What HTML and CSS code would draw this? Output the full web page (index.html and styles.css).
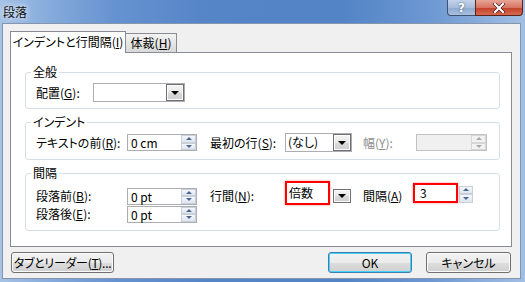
FILE: index.html
```html
<!DOCTYPE html>
<html lang="ja">
<head>
    <meta charset="UTF-8">
    <title>段落</title>
    <link rel="stylesheet" href="styles.css">
</head>
<body>

    <div class="window">
        <!-- Title bar -->
        <div class="titlebar">
            <span class="title">段落</span>
            <div class="caption-buttons">
                <span class="cap-btn help">?</span>
                <span class="cap-btn close">
                    <svg width="14" height="10" viewBox="0 0 14 10">
                        <path d="M3 1 L11 9 M11 1 L3 9" stroke="#3a1410" stroke-width="3.4" stroke-linecap="square" fill="none"/>
                        <path d="M3 1 L11 9 M11 1 L3 9" stroke="#fff" stroke-width="2.2" stroke-linecap="square" fill="none"/>
                    </svg>
                </span>
            </div>
        </div>

        <div class="client">
            <!-- Tabs -->
            <div class="tabs">
                <div class="tab active">インデントと行間隔(<u>I</u>)</div>
                <div class="tab">体裁(<u>H</u>)</div>
            </div>

            <div class="panel">
                <!-- General -->
                <div class="group g-general">
                    <div class="group-title">全般</div>
                    <div class="row-general">
                        <span class="lbl lbl-align">配置(<u>G</u>):</span>
                        <div class="combo combo-align">
                            <span class="combo-text"></span>
                            <span class="combo-btn"><i class="tri"></i></span>
                        </div>
                    </div>
                </div>

                <!-- Indent -->
                <div class="group g-indent">
                    <div class="group-title">インデント</div>
                    <div class="grid grid-indent">
                        <span class="lbl">テキストの前(<u>R</u>):</span>
                        <div class="spin">
                            <span class="spin-text">0 cm</span>
                            <span class="spin-btns"><i class="arr up"></i><i class="arr down"></i></span>
                        </div>
                        <span class="lbl">最初の行(<u>S</u>):</span>
                        <div class="combo combo-small">
                            <span class="combo-text">(なし)</span>
                            <span class="combo-btn"><i class="tri"></i></span>
                        </div>
                        <span class="lbl disabled">幅(<u>Y</u>):</span>
                        <div class="spin spin-disabled">
                            <span class="spin-text"></span>
                            <span class="spin-btns"><i class="arr up"></i><i class="arr down"></i></span>
                        </div>
                    </div>
                </div>

                <!-- Spacing -->
                <div class="group g-spacing">
                    <div class="group-title">間隔</div>
                    <div class="grid grid-spacing">
                        <span class="lbl">段落前(<u>B</u>):</span>
                        <div class="spin">
                            <span class="spin-text">0 pt</span>
                            <span class="spin-btns"><i class="arr up"></i><i class="arr down"></i></span>
                        </div>
                        <span class="lbl">行間(<u>N</u>):</span>
                        <div class="marked-combo">
                            <span class="mark mark-combo">倍数</span>
                            <span class="combo-btn short"><i class="tri"></i></span>
                        </div>
                        <span class="lbl">間隔(<u>A</u>)</span>
                        <div class="marked-spin">
                            <span class="mark mark-spin">3</span>
                            <span class="spin-btns loose"><i class="arr up"></i><i class="arr down"></i></span>
                        </div>

                        <span class="lbl">段落後(<u>E</u>):</span>
                        <div class="spin">
                            <span class="spin-text">0 pt</span>
                            <span class="spin-btns"><i class="arr up"></i><i class="arr down"></i></span>
                        </div>
                    </div>
                </div>
            </div>

            <!-- Buttons -->
            <div class="footer">
                <button class="btn btn-tabs">タブとリーダー(<u>T</u>)...</button>
                <button class="btn btn-ok">OK</button>
                <button class="btn btn-cancel">キャンセル</button>
            </div>
        </div>
    </div>

</body>
</html>
```

FILE: styles.css
```css
* {
    box-sizing: border-box;
}
body {
    margin: 0;
    font-family: "Noto Sans CJK JP", "Noto Sans", sans-serif;
    font-size: 12px;
    line-height: 14px;
    color: #000;
    font-feature-settings: "palt";
}
u {
    text-decoration-thickness: 1px;
    text-underline-offset: 1px;
}
.window {
    width: 525px;
    height: 282px;
    padding: 0 4px 3px 2px;
    display: flex;
    flex-direction: column;
    background: linear-gradient(90deg, #a6c2e6 0%, #8aaedd 8%, #6592d0 22%, #5584c7 40%, #5384c6 65%, #6d98d2 82%, #a2bfe4 100%);
}

/* Title bar */
.titlebar {
    height: 23px;
    flex-shrink: 0;
    display: flex;
    align-items: flex-start;
}
.title {
    margin: 5px 0 0 1px;
    color: #111;
    text-shadow: 0 0 4px #dfeaf7, 0 0 6px #dfeaf7;
}
.caption-buttons {
    margin-left: auto;
    margin-right: -2px;
    display: flex;
}
.cap-btn {
    height: 16px;
    display: flex;
    align-items: center;
    justify-content: center;
    border: 1px solid #3d5273;
    border-top: none;
}
.help {
    width: 28px;
    border-right: none;
    border-bottom-left-radius: 4px;
    background: linear-gradient(#c3d3e8, #a7bcdb 50%, #8ea8cf 51%, #a9bfde);
    color: #fff;
    font-weight: bold;
    font-family: "DejaVu Sans", sans-serif;
    font-size: 12px;
    text-shadow: 0 0 2px #2d4466;
}
.close {
    width: 48px;
    border-color: #5b2219;
    border-bottom-right-radius: 4px;
    background: linear-gradient(#e8a597, #d87462 50%, #c23f2a 51%, #d66a50);
}

/* Client area */
.client {
    flex: 1;
    display: flex;
    flex-direction: column;
    background: #f0f0f0;
    border: 1px solid #8595ad;
    padding: 7px 8px 5px 7px;
}
.tabs {
    display: flex;
    align-items: flex-end;
    height: 22px;
    flex-shrink: 0;
    margin-bottom: -1px;
}
.tab {
    width: 52px;
    height: 19px;
    margin: 0 0 1px -1px;
    padding-top: 2px;
    text-align: center;
    white-space: nowrap;
    border: 1px solid #898c95;
    border-bottom: none;
    background: linear-gradient(#f3f3f3, #e6e6e6 50%, #d9d9d9);
}
.tab.active {
    position: relative;
    z-index: 1;
    width: 116px;
    height: 22px;
    margin: 0;
    padding-top: 3px;
    background: #fff;
}
.panel {
    height: 195px;
    flex-shrink: 0;
    background: #fff;
    border: 1px solid #898c95;
    padding: 0 11px 15px 14px;
}

/* Group boxes */
.group {
    border: 1px solid #d5dfe5;
    border-radius: 3px;
    padding: 0 6px 0 10px;
}
.group-title {
    width: max-content;
    height: 14px;
    margin: -8px 0 0 -5px;
    padding: 0 2px;
    background: #fff;
}
.g-general {
    margin-top: 19px;
    padding-bottom: 6px;
}
.g-indent {
    margin-top: 13px;
    padding-bottom: 7px;
}
.g-spacing {
    margin-top: 13px;
    padding-bottom: 7px;
}
.row-general {
    display: flex;
    align-items: center;
    height: 19px;
    margin-top: 4px;
}
.lbl-align {
    width: 57px;
}
.grid {
    display: grid;
    grid-template-columns: 91px 83px 75px 78px 50px auto;
    align-items: center;
}
.grid-indent {
    grid-auto-rows: 19px;
    margin-top: 4px;
}
.grid-spacing {
    grid-auto-rows: 18px;
    margin-top: 7px;
}
.lbl {
    white-space: nowrap;
}
.lbl.disabled {
    color: #8d8d8d;
}

/* Combo boxes */
.combo {
    height: 19px;
    display: flex;
    border: 1px solid #abadb3;
    background: #fff;
}
.combo-align {
    width: 92px;
}
.combo-small {
    width: 67px;
}
.combo-text {
    flex: 1;
    padding: 1px 0 0 2px;
}
.combo-btn {
    width: 18px;
    display: flex;
    align-items: center;
    justify-content: center;
    border: 1px solid #707070;
    box-shadow: inset 0 0 0 1px #fcfcfc;
    background: linear-gradient(#f4f4f4, #e8e8e8 50%, #d9d9d9 51%, #cfcfcf);
}
.combo-btn.short {
    height: 14px;
    margin: 0 0 1px 3px;
}
.tri {
    width: 0;
    height: 0;
    margin-top: 1px;
    border-left: 4px solid transparent;
    border-right: 4px solid transparent;
    border-top: 4px solid #000;
}

/* Spin boxes */
.spin {
    width: 70px;
    height: 17px;
    display: flex;
    border: 1px solid #abadb3;
    background: #fff;
}
.spin-text {
    flex: 1;
    padding: 1px 0 0 3px;
    line-height: 13px;
}
.spin-btns {
    width: 15px;
    display: flex;
    flex-direction: column;
}
.arr {
    flex: 1;
    display: flex;
    align-items: center;
    justify-content: center;
    border: 1px solid #c9d0da;
    background: linear-gradient(#f4f7fb, #dfe6ef);
}
.arr::after {
    content: "";
    border-left: 3px solid transparent;
    border-right: 3px solid transparent;
}
.arr.up::after {
    border-bottom: 3px solid #4c6592;
}
.arr.down::after {
    border-top: 3px solid #4c6592;
}
.spin-disabled {
    width: 71px;
    margin-left: 3px;
    background: #f0f0f0;
    border-color: #c2c2c2;
}
.spin-disabled .arr {
    border-color: #d6d6d6;
    background: #f2f2f2;
}
.spin-disabled .arr::after {
    border-bottom-color: #a8a8a8;
    border-top-color: #a8a8a8;
}

/* Red annotation frames */
.marked-combo, .marked-spin {
    display: flex;
    align-items: center;
}
.mark {
    display: flex;
    align-items: center;
    border: 2px solid #f00;
    box-shadow: 0 0 2px rgba(255, 60, 60, 0.6);
    background: #fff;
}
.mark-combo {
    width: 45px;
    height: 24px;
    margin-bottom: 6px;
    padding-left: 2px;
}
.mark-spin {
    width: 45px;
    height: 20px;
    margin-bottom: 6px;
    padding-left: 5px;
}
.spin-btns.loose {
    width: 14px;
    height: 17px;
    margin: 0 0 4px 1px;
}

/* Dialog buttons */
.footer {
    display: flex;
    margin: 5px 1px 0 1px;
}
.btn {
    height: 21px;
    padding: 0;
    font: inherit;
    color: #000;
    white-space: nowrap;
    border: 1px solid #707070;
    border-radius: 3px;
    box-shadow: inset 0 0 0 1px #fbfbfb;
    background: linear-gradient(#f2f2f2, #ebebeb 50%, #dddddd 51%, #cfcfcf);
}
.btn-tabs {
    width: 103px;
    letter-spacing: -0.3px;
}
.btn-ok {
    width: 84px;
    margin-left: auto;
    border-color: #3c7fb1;
    box-shadow: inset 0 0 0 1px #48d0f8;
}
.btn-cancel {
    width: 85px;
    margin-left: 14px;
}
```
